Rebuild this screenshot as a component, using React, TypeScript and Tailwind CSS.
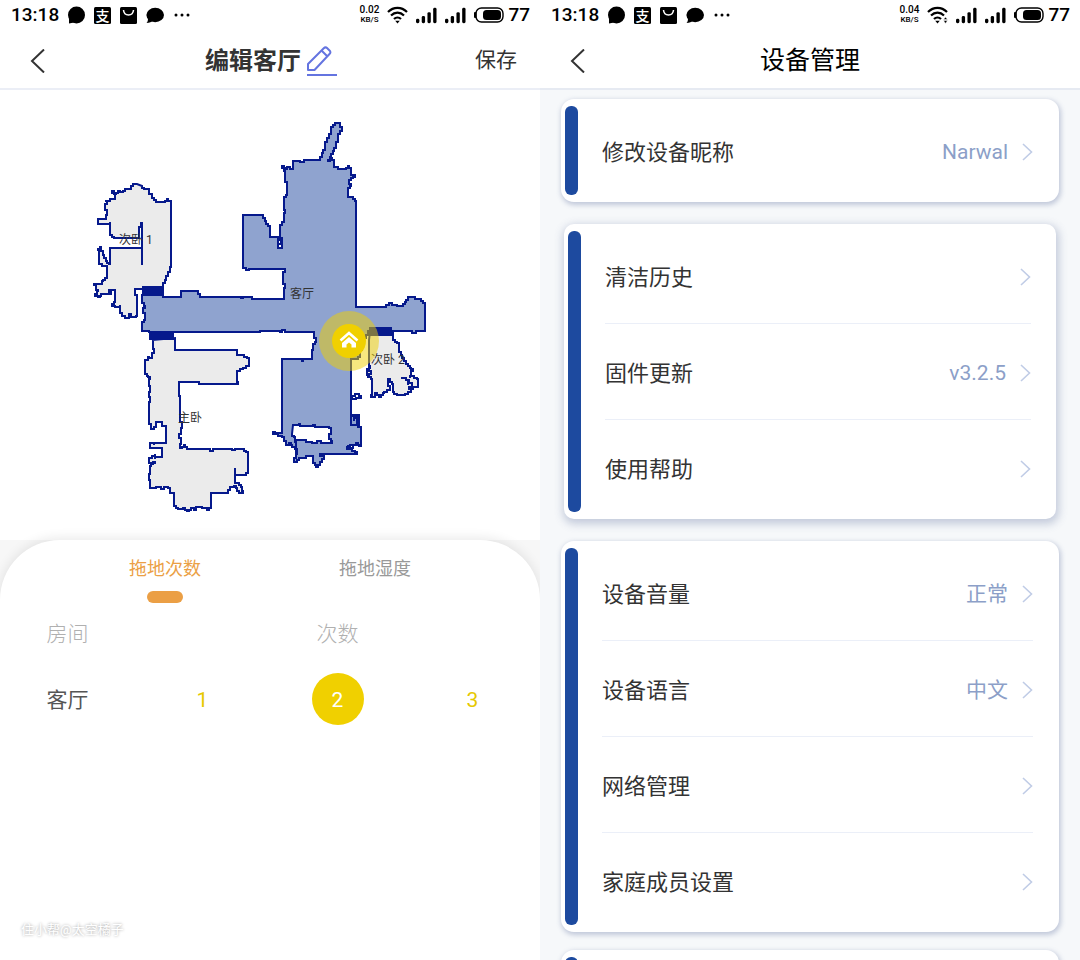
import React, { useState } from 'react';

const WifiIcon: React.FC<{ active?: boolean }> = ({ active }) => (
  <svg className="h-[18px] w-[21px]" viewBox="0 0 21 18" fill="none" stroke="black" strokeWidth="2.2">
    <path d="M1 6C6.5 0.500 14.500 0.500 20 6" />
    <path d="M4 9.500C7.800 5.700 13.200 5.700 17 9.500" />
    <path d="M7 13C9 11 12 11 14 13" />
    <path d="M8.200 14.700h4.600l-2.300 2.800z" fill="black" stroke="none" />
    {active && <path d="M16.500 14.500h4l-2 3zM16.500 13.500h4l-2-2.500z" fill="black" stroke="white" strokeWidth=".5" />}
  </svg>
);

const SignalIcon = () => (
  <svg className="h-[17px] w-[21px]" viewBox="0 0 22 17" fill="black">
    <rect x="0" y="12" width="3.500" height="4.500" rx="1.500" />
    <rect x="6" y="9" width="3.500" height="7.500" rx="1.500" />
    <rect x="12" y="5" width="3.500" height="11.500" rx="1.500" />
    <rect x="18" y="0.500" width="3.500" height="16" rx="1.500" />
  </svg>
);

const BatteryIcon = () => (
  <svg className="h-4 w-[30px]" viewBox="0 0 30 16">
    <rect x="2" y="1" width="27" height="14" rx="5.500" fill="none" stroke="black" strokeWidth="1.400" />
    <rect x="0" y="5" width="2.500" height="6" rx="1" fill="black" />
    <rect x="9" y="3" width="18" height="10" rx="3.500" fill="black" />
  </svg>
);

const StatusBar: React.FC<{ speed: string; active?: boolean }> = ({ speed, active }) => (
  <div className="flex h-[30px] items-center justify-between pl-[11px] pr-2.5 font-medium text-black">
    <div className="flex items-center gap-[9px]">
      <span className="text-[19px] leading-[30px]">13:18</span>
      <svg className="h-[18px] w-[17px]" viewBox="0 0 17 18">
        <circle cx="8.500" cy="9" r="8.500" />
        <path d="M1 12v5.500l5-1z" />
      </svg>
      <svg className="h-[17px] w-[17px]" viewBox="0 0 17 17">
        <rect width="17" height="17" rx="1.500" />
        <text x="8.500" y="13.500" textAnchor="middle" fontSize="14" fontWeight="500" fill="white">支</text>
      </svg>
      <svg className="h-[17px] w-[17px]" viewBox="0 0 17 17">
        <rect width="17" height="17" rx="1.500" />
        <path d="M3.500 3C4 9.500 13 9.500 13.500 3" fill="none" stroke="white" strokeWidth="1.500" />
      </svg>
      <svg className="h-[17px] w-[18px]" viewBox="0 0 18 17">
        <ellipse cx="9.200" cy="8" rx="8.800" ry="7.200" />
        <path d="M2 11c0 3-.5 4-1.500 5 3 0 5-1 7-2.500z" />
      </svg>
      <svg className="h-1 w-[17px]" viewBox="0 0 17 4">
        <circle cx="3" cy="2" r="1.500" />
        <circle cx="9" cy="2" r="1.500" />
        <circle cx="15" cy="2" r="1.500" />
      </svg>
    </div>
    <div className="flex items-center gap-2">
      <div className="flex flex-col items-center">
        <span className="text-[10px] leading-[10px]">{speed}</span>
        <span className="text-[8px] leading-[10px]">KB/S</span>
      </div>
      <WifiIcon active={active} />
      <SignalIcon />
      <SignalIcon />
      <div className="flex items-center gap-1">
        <BatteryIcon />
        <span className="text-[19px] leading-[30px]">77</span>
      </div>
    </div>
  </div>
);

const BackButton = () => (
  <button type="button" aria-label="返回" className="flex h-10 w-10 items-center pl-[5px]">
    <svg className="h-6 w-[15px]" viewBox="0 0 15 24" fill="none" stroke="#333" strokeWidth="2">
      <path d="M14 0.500 2 12l12 11.500" />
    </svg>
  </button>
);

const Chevron = () => (
  <svg className="h-[18px] w-[11px]" viewBox="0 0 11 18" fill="none" stroke="#c0cce6" strokeWidth="1.600">
    <path d="M1 1l8.500 8L1 17" />
  </svg>
);

const CELL = 2;

const toSteps = (outline: string): string => {
  const nums = outline.split(' ').map(Number);
  let x = nums[0];
  let y = nums[1];
  let d = `M${x} ${y}`;
  for (let i = 2; i < nums.length; i += 2) {
    const dx = nums[i] - x;
    const dy = nums[i + 1] - y;
    const steps = Math.max(1, Math.round(Math.min(Math.abs(dx), Math.abs(dy)) / CELL));
    for (let s = 1; s <= steps; s++) {
      d += `H${Math.round(x + (dx * s) / steps)}V${Math.round(y + (dy * s) / steps)}`;
    }
    x = nums[i];
    y = nums[i + 1];
  }
  return d + 'Z';
};

const livingRoom = toSteps(
  '142 295 142 303 145 308 143 313 145 320 142 323 142 331 149 332 255 332 260 331 280 332 282 330 285 332 314 332 314 338 316 342 313 346 313 350 312 359 305 359 303 361 302 359 282 360 282 433 275 432 273 434 282 437 284 441 286 445 289 443 292 447 295 449 297 454 294 462 299 458 306 456 312 456 313 463 316 467 320 462 324 456 320 454 355 454 357 452 352 449 347 447 350 445 356 443 359 446 361 440 361 427 358 425 359 415 351 414 351 359 358 357 362 342 368 331 392 331 409 331 412 333 416 331 422 331 425 329 425 303 421 299 415 297 409 297 406 302 403 306 397 305 392 303 386 307 358 307 356 299 356 201 353 197 348 196 348 188 351 184 349 180 351 178 355 175 351 174 351 168 349 166 346 169 342 169 338 167 334 166 334 160 332 158 330 161 328 160 331 154 334 148 336 142 338 134 342 127 340 123 336 123 333 127 331 134 327 142 325 150 320 160 307 160 304 162 300 161 294 161 293 169 290 167 287 169 284 166 282 168 285 173 285 182 287 188 287 195 284 198 284 210 285 213 284 222 280 227 280 238 282 239 282 248 278 248 278 237 270 237 270 226 266 221 263 215 245 215 243 217 243 268 246 270 249 269 284 269 285 272 283 276 283 284 285 288 284 299 255 299 252 297 243 298 241 297 201 297 198 291 183 291 181 297 165 297 163 295'
);

const table = toSteps('293 425 299 424 300 426 313 425 315 427 329 428 331 434 329 439 332 443 325 443 321 441 317 443 306 440 296 442 295 437 292 434');

const bedroomOne = toSteps(
  '137 184 133 186 131 189 126 189 123 192 120 191 116 194 112 191 115 195 115 199 110 199 110 201 105 201 107 204 105 210 107 215 106 219 102 219 98 221 98 224 103 224 110 222 110 235 114 238 139 238 139 227 141 223 142 248 110 248 110 264 107 261 104 255 101 247 98 250 99 264 102 266 107 267 107 278 103 281 102 284 94 285 96 290 98 291 95 296 98 297 101 294 108 294 111 292 109 290 115 291 115 302 112 306 115 307 120 305 120 313 122 316 125 318 128 318 129 314 131 317 136 316 137 311 137 295 135 293 135 289 163 289 163 283 166 276 170 267 171 201 168 199 165 202 158 202 154 198 152 194 149 194 149 189 145 189 142 186'
);

const masterBedroom = toSteps(
  '152 340 153 349 154 353 152 358 149 357 148 360 145 361 145 374 150 379 149 386 150 392 149 397 150 402 149 408 149 424 151 429 154 427 156 422 161 422 162 426 166 427 166 443 154 445 154 443 149 443 150 448 162 448 162 457 155 456 149 460 149 463 155 462 151 466 150 474 149 480 150 488 156 487 161 489 164 487 168 488 170 493 174 493 174 506 178 509 183 508 187 511 191 508 194 510 196 507 202 508 207 510 211 505 211 493 226 493 230 487 234 486 239 493 243 491 242 487 239 483 236 483 235 475 238 475 244 475 248 470 248 452 244 449 235 450 232 449 215 449 213 451 210 449 188 449 185 445 182 448 180 444 181 438 179 434 182 422 180 396 179 382 197 382 199 384 236 384 238 382 237 377 237 371 246 366 249 364 249 358 244 355 239 355 237 350 176 350 175 338'
);

const bedroomTwo = toSteps(
  '370 332 392 333 393 340 397 343 399 352 402 358 406 364 413 371 411 376 417 379 418 387 413 389 409 387 411 392 405 395 400 395 394 392 393 384 390 379 388 386 390 390 384 393 381 397 377 393 375 397 371 395 372 379 369 375 367 369 370 366 369 340'
);

const FloorMap = () => (
  <svg className="block h-[450px] w-full" viewBox="0 90 540 450">
    <g stroke="#06198c" strokeWidth="2">
      <path fill="#8fa3cf" d={livingRoom} />
      <path fill="white" d={table} />
      <path fill="none" d="M351 416h8v9h-8zM354 421v-3h3v6M347 446h3v2h3v-3M278 240h3v4h-3M296 443v11M352 396h3v-2h4v2h2v2h-5v1h-4z" />
      <path fill="#ebebeb" d={bedroomOne} />
      <path fill="none" d="M142 222v43" />
      <path fill="#ebebeb" d={masterBedroom} />
      <path fill="none" d="M235 468v10M155 454v5" />
      <path fill="#ebebeb" d={bedroomTwo} />
      <path fill="none" d="M368 371h3v3h-3v4M401 378h5v2h2v5M409 379v4h3v3M414 376h-4v2" />
    </g>
    <g fill="#06198c">
      <rect x="142" y="286" width="22" height="9" />
      <rect x="149" y="331" width="25" height="9" />
      <rect x="369" y="327" width="23" height="9" />
    </g>
    <g fontSize="12" fill="#333">
      <text x="119" y="244">次卧 1</text>
      <text x="290" y="298">客厅</text>
      <text x="178" y="422">主卧</text>
      <text x="371" y="364">次卧 2</text>
    </g>
    {/* dock marker */}
    <circle cx="349" cy="341" r="30" fill="#f0d000" fillOpacity=".5" />
    <circle cx="349" cy="341" r="17" fill="#f0d000" />
    <path d="M340.500 340.500l8.500-7.500 8.500 7.500" fill="none" stroke="white" strokeWidth="2.600" />
    <path d="M342 343l7-6 7 6v4.500h-4.500v-3l-2.500-2-2.500 2v3H342z" fill="white" />
  </svg>
);

const tabs = ['拖地次数', '拖地湿度'];
const counts = [1, 2, 3];

const RoomScreen = () => {
  const [tab, setTab] = useState(tabs[0]);
  const [count, setCount] = useState(2);

  return (
    <section className="flex h-screen flex-col overflow-hidden bg-white">
      <StatusBar speed="0.02" />
      <header className="grid h-[60px] grid-cols-[1fr_auto_1fr] items-center border-b-2 border-[#ebeef6] pl-[25px] pr-[23px] pt-1">
        <BackButton />
        <div className="flex items-center gap-1.5">
          <h1 className="text-[24px] font-bold text-[#333]">编辑客厅</h1>
          <button type="button" aria-label="编辑名称">
            <svg className="h-[31px] w-[30px]" viewBox="0 0 30 31" fill="none" stroke="#6474e0" strokeWidth="2" strokeLinejoin="round">
              <path d="M1 24V18L16.500 2.500Q18.500 0.500 20 2L23 5Q24 6.500 22.500 8L7.500 24Z" />
              <path d="M14.500 4.500 20.500 10.500M0 29H30" />
            </svg>
          </button>
        </div>
        <button type="button" className="justify-self-end text-[21px] text-[#333]">保存</button>
      </header>
      <FloorMap />
      <div className="relative flex-1 bg-[#f7f7f7]">
        <div className="h-full rounded-t-[60px] bg-white pt-[15px] shadow-[0_-2px_12px_rgba(0,0,0,0.09)]">
          <div role="tablist" className="grid grid-cols-2 px-[60px]">
            {tabs.map((name) => (
              <button
                key={name}
                type="button"
                role="tab"
                aria-selected={tab === name}
                onClick={() => setTab(name)}
                className="flex flex-col items-center gap-[9px]"
              >
                <span className={tab === name ? 'text-[18px] leading-[27px] text-[#eb9f45]' : 'text-[18px] leading-[27px] text-[#999]'}>{name}</span>
                {tab === name && <span className="h-3 w-9 rounded-full bg-[#eb9f45]" />}
              </button>
            ))}
          </div>
          <table className="w-full table-fixed text-center text-[21px]">
            <thead>
              <tr className="h-[60px] text-[#b0b0b0]">
                <th scope="col" className="pt-1 font-light">房间</th>
                <th scope="col" colSpan={3} className="pt-1 font-light">次数</th>
              </tr>
            </thead>
            <tbody>
              <tr className="h-[72px]">
                <th scope="row" className="pt-1 font-normal text-[#555]">客厅</th>
                {counts.map((n) => (
                  <td key={n}>
                    <button
                      type="button"
                      aria-pressed={count === n}
                      onClick={() => setCount(n)}
                      className={count === n ? 'h-[52px] w-[52px] rounded-full bg-[#f0d000] pt-1 text-white' : 'h-[52px] w-[52px] rounded-full pt-1 text-[#e6c800]'}
                    >
                      {n}
                    </button>
                  </td>
                ))}
              </tr>
            </tbody>
          </table>
        </div>
        <p className="absolute bottom-5 left-[21px] text-[13px] leading-[20px] text-white [text-shadow:0_0_3px_rgba(0,0,0,0.4)]">住小帮@太空橘子</p>
      </div>
    </section>
  );
};

interface SettingItem {
  label: string;
  value?: string;
}

const SettingsCard: React.FC<{ items: SettingItem[]; inset?: boolean }> = ({ items, inset }) => (
  <div
    className={
      inset
        ? 'mx-[3px] flex rounded-[10px] bg-white pr-[25px] shadow-[1px_3px_8px_2px_rgba(80,100,150,0.3)]'
        : 'flex rounded-[13px] bg-white pr-[26px] shadow-[1px_2px_5px_1px_rgba(80,100,150,0.32)]'
    }
  >
    <div className="my-[7px] ml-1 w-[13px] shrink-0 rounded-[6px] bg-[#1d4a9f]" />
    <ul className="ml-6 flex-1 divide-y divide-[#ebeff8] py-1">
      {items.map((item) => (
        <li key={item.label}>
          <button type="button" className="flex h-[95px] w-full items-center justify-between pt-0.5">
            <span className="pt-0.5 text-[22px] text-[#333]">{item.label}</span>
            <span className="flex items-center gap-[14px] text-[21px] text-[#8c9fc8]">
              {item.value && <span className="pt-0.5">{item.value}</span>}
              <Chevron />
            </span>
          </button>
        </li>
      ))}
    </ul>
  </div>
);

const SettingsScreen = () => (
  <section className="flex h-screen flex-col overflow-hidden bg-[#f6f8fa]">
    <div className="bg-white">
      <StatusBar speed="0.04" active />
      <header className="grid h-[60px] grid-cols-[1fr_auto_1fr] items-center border-b-2 border-[#e6eaf2] px-[25px] pt-1">
        <BackButton />
        <h1 className="text-[25px] text-black">设备管理</h1>
      </header>
    </div>
    <div className="flex flex-col px-[21px] pt-[9px]">
      <div className="flex flex-col gap-[22px]">
        <SettingsCard items={[{ label: '修改设备昵称', value: 'Narwal' }]} />
        <SettingsCard inset items={[{ label: '清洁历史' }, { label: '固件更新', value: 'v3.2.5' }, { label: '使用帮助' }]} />
        <SettingsCard
          items={[
            { label: '设备音量', value: '正常' },
            { label: '设备语言', value: '中文' },
            { label: '网络管理' },
            { label: '家庭成员设置' },
          ]}
        />
      </div>
      <div className="mt-[18px] flex h-24 rounded-[13px] bg-white shadow-[1px_2px_5px_1px_rgba(80,100,150,0.32)]">
        <div className="my-[7px] ml-1 w-[13px] rounded-[6px] bg-[#1d4a9f]" />
      </div>
    </div>
  </section>
);

const App: React.FC = () => (
  <main className="grid grid-cols-2 font-['Roboto','Noto_Sans_CJK_SC',sans-serif]">
    <RoomScreen />
    <SettingsScreen />
  </main>
);

export default App;
